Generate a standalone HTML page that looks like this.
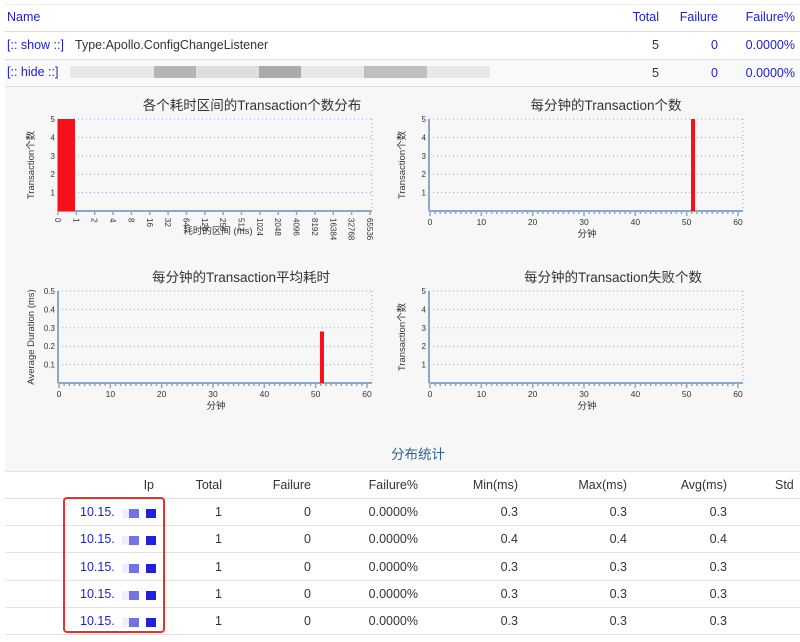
<!DOCTYPE html>
<html><head><meta charset="utf-8">
<style>
*{margin:0;padding:0;box-sizing:border-box}
body{width:800px;height:642px;overflow:hidden;background:#fff;font-family:"Liberation Sans","Noto Sans CJK SC",sans-serif;font-size:12.5px;color:#333;position:relative}
.a{position:absolute;white-space:nowrap}
.r{text-align:right}
.blue{color:#2020d8}
.line{position:absolute;left:5px;right:0;height:1px;background:#ddd}
svg text{font-family:"Liberation Sans","Noto Sans CJK SC",sans-serif}
</style></head><body>
<div class="line" style="top:4px;background:#eee"></div>
<div class="a blue" style="left:7px;top:10px">Name</div>
<div class="a blue r" style="right:141px;top:10px">Total</div>
<div class="a blue r" style="right:82px;top:10px">Failure</div>
<div class="a blue r" style="right:5px;top:10px">Failure%</div>
<div class="line" style="top:31px"></div>
<div class="a blue" style="left:7px;top:38px">[:: show ::]</div>
<div class="a" style="left:75px;top:38px">Type:Apollo.ConfigChangeListener</div>
<div class="a r" style="right:141px;top:38px">5</div>
<div class="a blue r" style="right:82px;top:38px">0</div>
<div class="a blue r" style="right:5px;top:38px">0.0000%</div>
<div class="line" style="top:59px"></div>
<div style="position:absolute;left:5px;right:0;top:60px;height:26px;background:#f9f9f9"></div>
<div class="a blue" style="left:7px;top:65px">[:: hide ::]</div>
<div class="a" style="left:70px;top:66px;width:420px;height:12px;background:linear-gradient(90deg,#ddd 0 20%,#888 20% 30%,#ccc 30% 45%,#777 45% 55%,#ddd 55% 70%,#999 70% 85%,#ddd 85%);opacity:.6"></div>
<div class="a r" style="right:141px;top:66px">5</div>
<div class="a blue r" style="right:82px;top:66px">0</div>
<div class="a blue r" style="right:5px;top:66px">0.0000%</div>
<div class="line" style="top:86px"></div>
<div style="position:absolute;left:5px;right:0;top:87px;height:384px;background:#f7f7f7"></div>
<svg id="ch" class="a" style="left:0;top:0" width="800" height="642"></svg>
<div class="a" style="left:0;width:836px;text-align:center;top:443px;color:#2a6496;font-size:13.5px">分布统计</div>
<div class="line" style="top:471px;background:#e4e4e4"></div>
<div style="position:absolute;left:5px;right:0;top:472px;height:170px;background:#fff"></div>
<div id="tb"></div>
<div style="position:absolute;left:63px;top:497px;width:102px;height:136px;border:2px solid #e8312a;border-radius:4px"></div>
<script>
var s='';
function T(x,y,t,o){o=o||{};s+='<text x="'+x+'" y="'+y+'" font-size="'+(o.fs||8)+'" fill="#333" text-anchor="'+(o.a||'middle')+'"'+(o.tr?' transform="'+o.tr+'"':'')+'>'+t+'</text>';}
function L(x1,y1,x2,y2,c,w,d){s+='<line x1="'+x1+'" y1="'+y1+'" x2="'+x2+'" y2="'+y2+'" stroke="'+c+'" stroke-width="'+(w||1)+'"'+(d?' stroke-dasharray="'+d+'"':'')+'/>';}
function chart(x0,y0,title,yl,ymax,ylabels,xmode,bar,tc){
 var w=314,h=92,x1=x0+w,y1=y0+h;
 T(tc,y0-9,title,{fs:13.5});
 for(var i=1;i<=5;i++){var y=y1-h*i/5;L(x0,y,x1,y,'#8aa8c8',1,'1,3');T(x0-3,y+3,ylabels[i-1],{a:'end'});}
 L(x1,y0,x1,y1,'#8aa8c8',1,'1,3');
 L(x0,y0,x0,y1,'#8aa8c8',2);L(x0,y1,x1,y1,'#8aa8c8',2);
 T(x0-24,(y0+y1)/2,yl,{fs:9.5,tr:'rotate(-90 '+(x0-24)+' '+((y0+y1)/2)+')'});
 if(bar)s+='<rect x="'+bar[0]+'" y="'+(y1-h*bar[2])+'" width="'+bar[1]+'" height="'+(h*bar[2])+'" fill="#f5101a"/>';
 if(xmode=='log'){var lb=[0,1,2,4,8,16,32,64,128,256,512,1024,2048,4096,8192,16384,32768,65536];
  for(var i=0;i<lb.length;i++){var x=x0+i*18.35;L(x,y1,x,y1+4,'#8aa8c8',1.5);T(x-3,y1+7,lb[i],{a:'start',tr:'rotate(90 '+(x-3)+' '+(y1+7)+')'});}
  T(x0+160,y1+23,'耗时的区间 (ms)',{fs:9.5});
 }else{var sp=308/60;for(var m=0;m<=61;m++){var x=x0+1+m*sp;if(x>x1)break;L(x,y1,x,y1+(m%10==0?5:3),'#8aa8c8',1.5);if(m%10==0)T(x,y1+14,m,{fs:8.5});}
  T(x0+158,y1+26,'分钟',{fs:9.5});}
}
var n=['1','2','3','4','5'];
chart(58,119,'各个耗时区间的Transaction个数分布','Transaction个数',5,n,'log',[58,17,1],252);
chart(429,119,'每分钟的Transaction个数','Transaction个数',5,n,'min',[691,4,1],606);
chart(58,291,'每分钟的Transaction平均耗时','Average Duration (ms)',.5,['0.1','0.2','0.3','0.4','0.5'],'min',[320,4,0.56],241);
chart(429,291,'每分钟的Transaction失败个数','Transaction个数',5,n,'min',null,613);
document.getElementById('ch').innerHTML=s;
var h='',cols=[154,222,311,418,518,627,727];
var hd=['Ip','Total','Failure','Failure%','Min(ms)','Max(ms)','Avg(ms)'];
function cell(x,y,t,c){h+='<div class="a r'+(c?' blue':'')+'" style="right:'+(800-x)+'px;top:'+y+'px">'+t+'</div>';}
for(var i=0;i<7;i++)cell(cols[i],478,hd[i]);
h+='<div class="a" style="left:775px;top:478px">Std</div>';
h+='<div class="line" style="top:498px;background:#ddd"></div>';
var mn=['0.3','0.4','0.3','0.3','0.3'];
for(var r=0;r<5;r++){var y=505+r*27.3;
 h+='<div class="a blue" style="left:80px;top:'+y+'px">10.15.</div><div class="a" style="left:122px;top:'+(y+4)+'px;width:34px;height:9px;background:linear-gradient(90deg,#eef 0 20%,#7373e8 20% 50%,#fff 50% 70%,#2020e0 70%)"></div>';
 cell(cols[1],y,'1');cell(cols[2],y,'0');cell(cols[3],y,'0.0000%');cell(cols[4],y,mn[r]);cell(cols[5],y,mn[r]);cell(cols[6],y,mn[r]);
 h+='<div class="line" style="top:'+(525+r*27.3)+'px;background:#e2e2e2"></div>';}
document.getElementById('tb').innerHTML=h;
</script>
</body></html>
